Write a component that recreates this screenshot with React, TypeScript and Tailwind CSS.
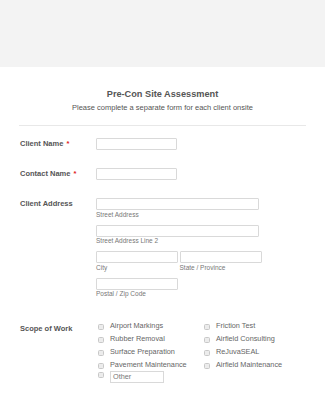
import React from "react";

const Input = ({ w }: { w: string }) => (
  <div className={`${w} h-[12px] border border-[#d9d9d9] rounded-[1px] bg-white`} />
);

const Sub = ({ children }: { children: React.ReactNode }) => (
  <div className="text-[6.5px] leading-[9px] text-[#777] mt-[-0.5px]">{children}</div>
);

const Check = ({ label }: { label: string }) => (
  <div className="flex items-center h-[13px]">
    <div className="w-[6px] h-[6px] rounded-[1.5px] border border-[#c8c8c8] bg-[#ececec]" />
    <span className="ml-[6px] text-[7.3px] text-[#666]">{label}</span>
  </div>
);

export default function App() {
  return (
    <div className="w-[325px] h-[400px] bg-white overflow-hidden" style={{ fontFamily: '"Liberation Sans", Arial, sans-serif' }}>
      <div className="h-[67px] bg-[#f3f3f3]" />
      <div className="pt-[21px] text-center">
        <div className="text-[9.2px] leading-[12px] font-bold text-[#555]">Pre-Con Site Assessment</div>
        <div className="mt-[3px] text-[7.5px] leading-[10px] text-[#555]">Please complete a separate form for each client onsite</div>
      </div>
      <div className="mx-[19px] mt-[12px] border-t border-[#e8e8e8]" />
      <div className="px-[20px] pt-[12px]">
        <div className="flex items-center h-[12px]">
          <div className="w-[76px] text-[7.5px] font-bold text-[#555]">Client Name <span className="text-[#e02020] ml-[1px]">*</span></div>
          <Input w="w-[81px]" />
        </div>
        <div className="flex items-center h-[12px] mt-[18px]">
          <div className="w-[76px] text-[7.5px] font-bold text-[#555]">Contact Name <span className="text-[#e02020] ml-[1px]">*</span></div>
          <Input w="w-[81px]" />
        </div>
        <div className="flex mt-[18px]">
          <div className="w-[76px] text-[7.5px] font-bold text-[#555] leading-[12px]">Client Address</div>
          <div className="flex flex-col">
            <Input w="w-[163px]" />
            <Sub>Street Address</Sub>
            <div className="mt-[6px]"><Input w="w-[163px]" /></div>
            <Sub>Street Address Line 2</Sub>
            <div className="mt-[6px] flex gap-[1.5px]">
              <div>
                <Input w="w-[82px]" />
                <Sub>City</Sub>
              </div>
              <div>
                <Input w="w-[82px]" />
                <Sub>State / Province</Sub>
              </div>
            </div>
            <div className="mt-[6px]">
              <Input w="w-[82px]" />
              <Sub>Postal / Zip Code</Sub>
            </div>
          </div>
        </div>
        <div className="flex mt-[22px]">
          <div className="w-[76px] text-[7.5px] font-bold text-[#555] leading-[13px] pt-[2px]">Scope of Work</div>
          <div className="flex pl-[2px]">
            <div className="w-[106px]">
              <Check label="Airport Markings" />
              <Check label="Rubber Removal" />
              <Check label="Surface Preparation" />
              <Check label="Pavement Maintenance" />
              <div className="flex items-start h-[14px] mt-[-1px]">
                <div className="w-[6px] h-[6px] rounded-[1.5px] border border-[#c8c8c8] bg-[#ececec] mt-[1px]" />
                <div className="ml-[6px] w-[54px] h-[12px] border border-[#d9d9d9] text-[7.3px] text-[#777] leading-[10px] pl-[2px]">Other</div>
              </div>
            </div>
            <div>
              <Check label="Friction Test" />
              <Check label="Airfield Consulting" />
              <Check label="ReJuvaSEAL" />
              <Check label="Airfield Maintenance" />
            </div>
          </div>
        </div>
      </div>
    </div>
  );
}
